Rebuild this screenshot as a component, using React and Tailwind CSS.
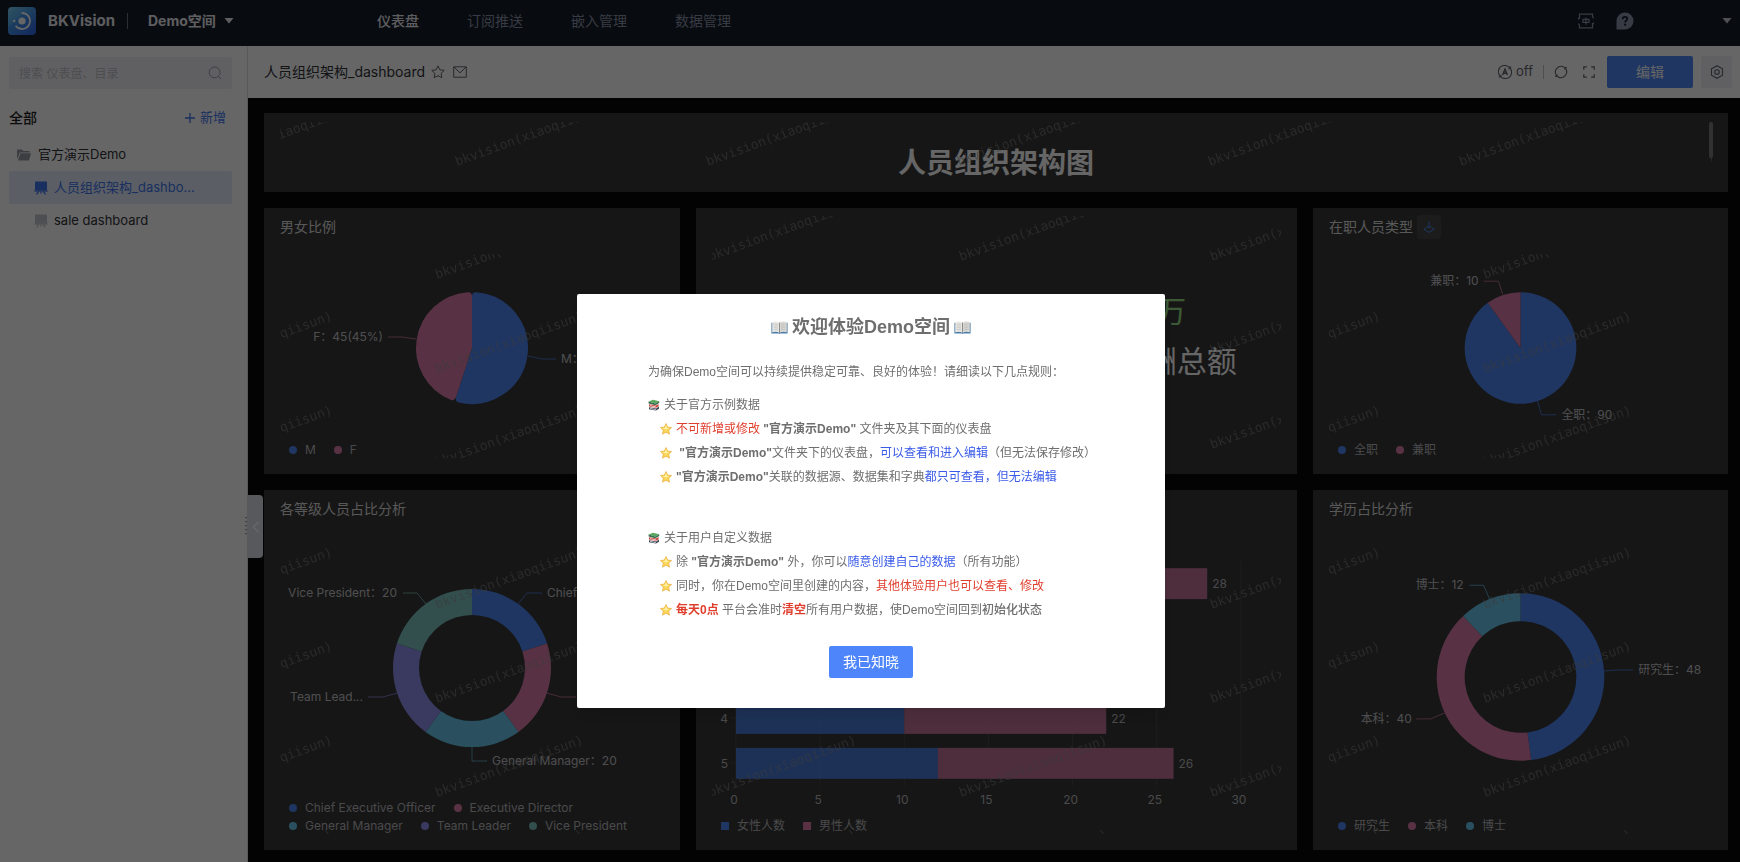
import React from "react";

const BLUE = "#4e87f5";
const PINK = "#dc7daa";
const CYAN = "#69c8f0";
const PURPLE = "#9191f0";
const GREEN = "#7dc3c0";

/* ---------- geometry ---------- */

function polar(cx, cy, r, deg) {
  const a = ((deg - 90) * Math.PI) / 180;
  return [cx + r * Math.cos(a), cy + r * Math.sin(a)];
}

function ringPath(cx, cy, r, inner, from, to) {
  const large = to - from > 180 ? 1 : 0;
  const [x0, y0] = polar(cx, cy, r, from);
  const [x1, y1] = polar(cx, cy, r, to);
  if (!inner) return `M${cx} ${cy}L${x0} ${y0}A${r} ${r} 0 ${large} 1 ${x1} ${y1}Z`;
  const [x2, y2] = polar(cx, cy, inner, to);
  const [x3, y3] = polar(cx, cy, inner, from);
  return `M${x0} ${y0}A${r} ${r} 0 ${large} 1 ${x1} ${y1}L${x2} ${y2}A${inner} ${inner} 0 ${large} 0 ${x3} ${y3}Z`;
}

/* Slice with rounded outer corners: an inset wedge, grown back by a round-joined stroke. */
function softSlicePath(cx, cy, r, d, from, to) {
  const half = (to - from) / 2;
  const [ax, ay] = polar(cx, cy, d / Math.sin((half * Math.PI) / 180), from + half);
  const rr = r - d;
  const shift = (Math.asin(d / rr) * 180) / Math.PI;
  const [x0, y0] = polar(cx, cy, rr, from + shift);
  const [x1, y1] = polar(cx, cy, rr, to - shift);
  const large = to - from - 2 * shift > 180 ? 1 : 0;
  return `M${ax} ${ay}L${x0} ${y0}A${rr} ${rr} 0 ${large} 1 ${x1} ${y1}Z`;
}

/* ---------- chart parts ---------- */

function PieChart({ label, height, cy, r, inner = 0, soft = false, slices, className }) {
  const total = slices.reduce((sum, s) => sum + s.value, 0);
  let angle = 0;
  return (
    <svg role="img" aria-label={label} viewBox={`0 0 384 ${height}`} className={className}>
      {slices.map((s) => {
        const from = angle;
        angle += (s.value / total) * 360;
        return soft ? (
          <path
            key={s.name}
            d={softSlicePath(192, cy, r, 4, from, angle)}
            fill={s.color}
            stroke={s.color}
            strokeWidth="8"
            strokeLinejoin="round"
          />
        ) : (
          <path key={s.name} d={ringPath(192, cy, r, inner, from, angle)} fill={s.color} />
        );
      })}
      {slices.map((s) => (
        <g key={s.name}>
          <polyline points={s.line} fill="none" stroke={s.color} strokeOpacity="0.75" />
          <text x={s.x} y={s.y + 4} textAnchor={s.anchor} fontSize="12" fill="#c4c4c8">
            {s.text}
          </text>
        </g>
      ))}
    </svg>
  );
}

function Legend({ rows, square = false }) {
  return (
    <div className="flex flex-col pt-px pl-[9px]">
      {rows.map((row, i) => (
        <ul key={i} className="flex h-[18px] items-center gap-[18px]">
          {row.map(([name, color]) => (
            <li key={name} className="flex items-center gap-2 text-xs whitespace-nowrap text-[#b8b8bc]">
              <svg viewBox="0 0 8 8" className="size-2" aria-hidden="true">
                {square ? <rect width="8" height="8" fill={color} /> : <circle cx="4" cy="4" r="4" fill={color} />}
              </svg>
              {name}
            </li>
          ))}
        </ul>
      ))}
    </div>
  );
}

function Watermark({ id, x, y }) {
  return (
    <svg aria-hidden="true" className="pointer-events-none absolute inset-0 size-full">
      <defs>
        <pattern id={id} x={x - 12} y={y - 80} width="251" height="94" patternUnits="userSpaceOnUse">
          <text
            x="14"
            y="80"
            transform="rotate(-20 14 80)"
            fontSize="13"
            fontFamily="DejaVu Sans Mono, monospace"
            fill="#909090"
            fillOpacity="0.55"
          >
            bkvision(xiaoqiisun)
          </text>
        </pattern>
      </defs>
      <rect width="100%" height="100%" fill={`url(#${id})`} />
    </svg>
  );
}

function Card({ title, action, watermark, children }) {
  return (
    <section className="flex min-w-0 flex-col bg-[#373737] px-4 pb-4">
      {title && (
        <header className="flex h-[46px] shrink-0 items-center gap-1 pb-2">
          <h2 className="text-sm text-[#dcdcdc]">{title}</h2>
          {action}
        </header>
      )}
      <div className={title ? "relative min-h-0 flex-1 overflow-hidden" : "relative mt-2 min-h-0 flex-1 overflow-hidden"}>
        {children}
        <Watermark {...watermark} />
      </div>
    </section>
  );
}

const BARS = [
  { name: "1", female: 13, male: 15 },
  { name: "2", female: 8, male: 10 },
  { name: "3", female: 9, male: 11 },
  { name: "4", female: 10, male: 12 },
  { name: "5", female: 12, male: 14 },
];

function BarChart() {
  const left = 24;
  const unit = 16.86;
  return (
    <svg role="img" aria-label="各部门男女人数" viewBox="0 0 570 280" className="h-[280px] w-full">
      {[0, 5, 10, 15, 20, 25, 30].map((n) => (
        <g key={n}>
          <line x1={left + n * unit} x2={left + n * unit} y1="25" y2="250" stroke="#4a4a4a" />
          <text x={left + n * unit - 2} y="268" textAnchor="middle" fontSize="12" fill="#b8b8bc">
            {n}
          </text>
        </g>
      ))}
      {BARS.map((b, i) => {
        const top = 32 + i * 45;
        const total = b.female + b.male;
        return (
          <g key={b.name}>
            <line x1="19" x2={left} y1={top + 15} y2={top + 15} stroke="#4a4a4a" />
            <text x="16" y={top + 20} textAnchor="end" fontSize="12" fill="#b8b8bc">
              {b.name}
            </text>
            <rect x={left} y={top} width={b.female * unit} height="31" fill={BLUE} fillOpacity="0.86" />
            <rect x={left + b.female * unit} y={top} width={b.male * unit} height="31" fill={PINK} fillOpacity="0.84" />
            <text x={left + total * unit + 5} y={top + 20} fontSize="12" fill="#b8b8bc">
              {total}
            </text>
          </g>
        );
      })}
    </svg>
  );
}

/* ---------- icons ---------- */

function Logo() {
  return (
    <svg viewBox="0 0 28 28" className="size-7" aria-hidden="true">
      <defs>
        <linearGradient id="logo" x1="0" y1="0" x2="1" y2="1">
          <stop offset="0" stopColor="#7cd0f5" />
          <stop offset="0.45" stopColor="#4ba0ee" />
          <stop offset="1" stopColor="#2f5ee8" />
        </linearGradient>
      </defs>
      <rect width="28" height="28" rx="4" fill="url(#logo)" />
      <path d="M0 20L16 6L28 16V24A4 4 0 0 1 24 28H4A4 4 0 0 1 0 24Z" fill="#2f6fe8" opacity="0.25" />
      <circle cx="14" cy="14" r="3.6" fill="#fff" />
      <path d="M13.6 6A8 8 0 1 1 7.6 18.8" fill="none" stroke="#fff" strokeWidth="1.8" />
      <circle cx="6.2" cy="14" r="1.2" fill="#fff" />
    </svg>
  );
}

function Caret() {
  return (
    <svg viewBox="0 0 10 6" className="h-1.5 w-2.5" aria-hidden="true">
      <path d="M0.5 0H9.5L5 5.5Z" fill="currentColor" />
    </svg>
  );
}

function LanguageIcon() {
  return (
    <svg viewBox="0 0 16 16" className="size-4" fill="none" stroke="currentColor" strokeWidth="1.3" aria-hidden="true">
      <path d="M1.5 6V1.2H14.5V4M14.5 10V14.8H1.5V12M0 6.4L1.5 4.4M16 9.6L14.5 11.6M14.5 4L15.8 5.4M1.5 12L0.2 10.6" />
      <path d="M5 6.3H11V9.3H5ZM8 4.4V11.8" strokeWidth="1.2" />
    </svg>
  );
}

function HelpIcon() {
  return (
    <svg viewBox="0 0 18 18" className="size-[18px]" aria-hidden="true">
      <path d="M9 0.5A8.5 8.5 0 1 1 9 17.5H1Q0.5 17.5 0.5 17V9A8.5 8.5 0 0 1 9 0.5Z" fill="currentColor" />
      <path d="M6.7 7.2C6.7 5.7 7.7 4.9 9 4.9C10.4 4.9 11.3 5.7 11.3 6.9C11.3 8.4 9.1 8.6 9.1 10.4" fill="none" stroke="#161c2a" strokeWidth="1.7" />
      <circle cx="9.1" cy="12.7" r="1.1" fill="#161c2a" />
    </svg>
  );
}

function BoardIcon() {
  return (
    <svg viewBox="0 0 14 14" className="size-3.5" fill="currentColor" aria-hidden="true">
      <rect x="1" y="0.4" width="12" height="8.8" rx="0.6" />
      <path d="M0.4 9.2H13.6V10.6H0.4Z" />
      <path d="M4.6 10.4L2.6 13.4M9.4 10.4L11.4 13.4M7 10.4V12.4" stroke="currentColor" strokeWidth="1.3" />
    </svg>
  );
}

function FolderIcon() {
  return (
    <svg viewBox="0 0 14 12" className="h-3 w-3.5" fill="currentColor" aria-hidden="true">
      <path d="M0 0.6H5L6.4 2H12.6V3.4H2.8L0.6 9.5H0Z" />
      <path d="M3.4 4.2H14L12 11.4H1Z" />
    </svg>
  );
}

function AutoIcon() {
  return (
    <svg viewBox="0 0 14 14" className="size-3.5" fill="none" stroke="currentColor" strokeWidth="1.1" aria-hidden="true">
      <path d="M2.6 11.5A6.2 6.2 0 0 1 10.6 1.9M11.4 2.5A6.2 6.2 0 0 1 3.4 12.1" />
      <path d="M0.8 11.9H3V9.8M13.2 2.1H11V4.2" />
      <path d="M4.6 10L7 4.2L9.4 10M5.5 8.3H8.5" strokeWidth="1.4" />
    </svg>
  );
}

function RefreshIcon() {
  return (
    <svg viewBox="0 0 14 14" className="size-3.5" fill="none" stroke="currentColor" strokeWidth="1.1" aria-hidden="true">
      <path d="M2.8 10.8A5.7 5.7 0 0 1 10.2 2.3M11.2 3.2A5.7 5.7 0 0 1 3.8 11.7" />
      <path d="M1.2 11.4H3.2V9.4M12.8 2.6H10.8V4.6" />
    </svg>
  );
}

function FullscreenIcon() {
  return (
    <svg viewBox="0 0 12 12" className="size-3" fill="none" stroke="currentColor" strokeWidth="1.2" aria-hidden="true">
      <path d="M0.8 3.8V0.8H3.8M8.2 0.8H11.2V3.8M11.2 8.2V11.2H8.2M3.8 11.2H0.8V8.2" />
    </svg>
  );
}

function SettingIcon() {
  return (
    <svg viewBox="0 0 14 14" className="size-3.5" fill="none" stroke="currentColor" strokeWidth="1.1" aria-hidden="true">
      <path d="M7 0.7L12.5 3.8V10.2L7 13.3L1.5 10.2V3.8Z" />
      <circle cx="7" cy="7" r="2.3" />
    </svg>
  );
}

function StarOutline() {
  return (
    <svg viewBox="0 0 14 14" className="size-3.5" fill="none" stroke="currentColor" strokeLinejoin="round" aria-hidden="true">
      <path d="M7 0.9L8.9 4.8L13.2 5.4L10.1 8.4L10.8 12.7L7 10.7L3.2 12.7L3.9 8.4L0.8 5.4L5.1 4.8Z" />
    </svg>
  );
}

function MailIcon() {
  return (
    <svg viewBox="0 0 14 12" className="h-3 w-3.5" fill="none" stroke="currentColor" aria-hidden="true">
      <path d="M0.7 0.8H13.3V11.2H0.7ZM1 1L7 6.8L13 1" />
    </svg>
  );
}

function SearchIcon() {
  return (
    <svg viewBox="0 0 14 14" className="size-3.5" fill="none" stroke="currentColor" aria-hidden="true">
      <circle cx="6.6" cy="6.4" r="5.4" />
      <path d="M10.4 10.4L13 13" />
    </svg>
  );
}

function DrillIcon() {
  return (
    <svg viewBox="0 0 12 12" className="size-3" fill="none" stroke={BLUE} aria-hidden="true">
      <path d="M6 0.5V7M3.6 4.8L6 7.2L8.4 4.8M3.4 6.6L0.8 8.2L6 11.4L11.2 8.2L8.6 6.6" />
    </svg>
  );
}

function OpenBook() {
  return (
    <svg viewBox="0 0 18 14" className="h-[13px] w-[17px]" aria-hidden="true">
      <path d="M0.3 1.8H17.7V13.4H10L9 14L8 13.4H0.3Z" fill="#4d7ea8" />
      <path d="M1.2 1.1C4 0.2 7 0.2 9 1.8V12.8C7 11.4 4 11.4 1.2 12.2Z" fill="#eceae6" />
      <path d="M16.8 1.1C14 0.2 11 0.2 9 1.8V12.8C11 11.4 14 11.4 16.8 12.2Z" fill="#dcdad6" />
      <path d="M9 1.8V12.8" stroke="#7f7f7f" strokeWidth="0.9" />
      <path d="M2.6 3.4C4.3 3 6 3.1 7.6 3.9M2.6 5.4C4.3 5 6 5.1 7.6 5.9M2.6 7.4C4.3 7 6 7.1 7.6 7.9M2.6 9.4C4.3 9 6 9.1 7.6 9.9M15.4 3.4C13.7 3 12 3.1 10.4 3.9M15.4 5.4C13.7 5 12 5.1 10.4 5.9M15.4 7.4C13.7 7 12 7.1 10.4 7.9M15.4 9.4C13.7 9 12 9.1 10.4 9.9" fill="none" stroke="#a9a9a9" strokeWidth="0.6" />
    </svg>
  );
}

function Books() {
  return (
    <svg viewBox="0 0 12 12" className="size-3" aria-hidden="true">
      <path d="M1 8.2L8.2 9.4L11 7.6V9.8L8 11.6L1 10.2Z" fill="#3d4350" />
      <path d="M1 5.2L8 6.6L10.6 5V7.2L8 8.8L1 7.4Z" fill="#c9453b" />
      <path d="M2 6.2L8 7.4V8.2L2 7Z" fill="#f3e9e2" />
      <path d="M2 9L8 10.2V10.9L2 9.7Z" fill="#d7dae2" />
      <path d="M0.6 2.6L5 0.8L11.2 2.2L7.4 4.4Z" fill="#58a85f" />
      <path d="M0.6 2.6L7.4 4.4L11.2 2.2V4L7.4 6.2L0.6 4.6Z" fill="#3a6f50" />
    </svg>
  );
}

function GoldStar() {
  return (
    <svg viewBox="0 0 12 12" className="size-3 shrink-0" aria-hidden="true">
      <path
        d="M6 0.5L7.7 4.1L11.6 4.5L8.7 7.2L9.5 11.2L6 9.2L2.5 11.2L3.3 7.2L0.4 4.5L4.3 4.1Z"
        fill="#fbd65a"
        stroke="#e5ac3a"
        strokeWidth="0.7"
        strokeLinejoin="round"
      />
      <path d="M6 2L7 4.8L9.6 5.1L6 6.4L2.4 5.1L5 4.8Z" fill="#fff2a8" />
    </svg>
  );
}

/* ---------- page regions ---------- */

function TopBar() {
  return (
    <header className="flex h-[46px] items-center bg-[#161c2a] text-sm text-[#8b93a7]">
      <div className="flex w-[377px] shrink-0 items-center pb-1 pl-2">
        <Logo />
        <span className="pl-3 text-[15px] font-bold text-[#eaebf0]">BKVision</span>
        <span className="ml-3 h-4 w-px bg-[#6b7385]" />
        <button type="button" className="ml-5 flex items-center gap-2 font-bold text-[#eaebf0]">
          Demo空间
          <Caret />
        </button>
      </div>
      <nav className="flex flex-1 items-center gap-12 pb-1">
        <a href="#dashboards" className="font-medium text-[#eaebf0]">仪表盘</a>
        <a href="#subscriptions">订阅推送</a>
        <a href="#embeds">嵌入管理</a>
        <a href="#data">数据管理</a>
      </nav>
      <div className="flex items-center pr-2 pb-1">
        <button type="button" aria-label="切换语言"><LanguageIcon /></button>
        <button type="button" aria-label="帮助" className="ml-[22px]"><HelpIcon /></button>
        <button type="button" aria-label="用户菜单" className="ml-[88px] text-[#c4c9d6]"><Caret /></button>
      </div>
    </header>
  );
}

function Sidebar() {
  return (
    <aside className="w-[248px] shrink-0 border-r border-[#dcdee5] bg-white pt-[11px] pr-[15px] pl-[9px] text-[13px] text-[#313238]">
      <label className="flex h-8 items-center rounded-xs bg-[#f0f1f5] px-2.5 text-[#979ba5]">
        <span className="sr-only">搜索</span>
        <input
          type="search"
          placeholder="搜索 仪表盘、目录"
          className="h-full min-w-0 flex-1 bg-transparent text-xs outline-none placeholder:text-[#c0c2c9]"
        />
        <SearchIcon />
      </label>
      <div className="mt-[15px] flex h-7 items-center justify-between pr-1.5">
        <h2 className="text-sm font-medium text-[#1c1d22]">全部</h2>
        <button type="button" className="flex items-center gap-1 text-[#3f76f0]">
          <svg viewBox="0 0 12 12" className="size-3" stroke="currentColor" strokeWidth="1.3" aria-hidden="true">
            <path d="M1 6H11M6 1V11" />
          </svg>
          新增
        </button>
      </div>
      <ul className="mt-1.5">
        <li className="flex h-[33px] items-center gap-[7px] pl-2">
          <span className="text-[#979ba5]"><FolderIcon /></span>
          官方演示Demo
        </li>
        <li>
          <a href="#org" className="flex h-[33px] items-center gap-1.5 rounded-xs bg-[#e3eaf9] pl-[25px] text-[#3f76f0]">
            <BoardIcon />
            人员组织架构_dashbo...
          </a>
        </li>
        <li>
          <a href="#sale" className="flex h-[33px] items-center gap-1.5 pl-[25px]">
            <span className="text-[#c4c6cc]"><BoardIcon /></span>
            sale dashboard
          </a>
        </li>
      </ul>
    </aside>
  );
}

function Toolbar() {
  return (
    <div className="flex h-[52px] items-center bg-white pr-2 pl-4 text-[#63656e]">
      <h1 className="text-sm text-[#313238]">人员组织架构_dashboard</h1>
      <button type="button" aria-label="收藏" className="ml-1.5"><StarOutline /></button>
      <button type="button" aria-label="订阅" className="ml-2"><MailIcon /></button>
      <div className="ml-auto flex items-center">
        <button type="button" className="flex items-center gap-1 text-[13px]">
          <AutoIcon />
          off
        </button>
        <span className="mx-2.5 h-3.5 w-px bg-[#c4c6cc]" />
        <button type="button" aria-label="刷新"><RefreshIcon /></button>
        <button type="button" aria-label="全屏" className="ml-[15px]"><FullscreenIcon /></button>
        <button type="button" className="ml-3 h-8 w-[86px] rounded-xs bg-[#4e87f5] text-sm text-white">编辑</button>
        <button type="button" aria-label="设置" className="ml-2 flex h-8 w-[31px] items-center justify-center rounded-xs bg-[#f0f1f5]">
          <SettingIcon />
        </button>
      </div>
    </div>
  );
}

function Metric({ value, name }) {
  return (
    <div className="flex flex-col items-center gap-2">
      <strong className="text-[30px] leading-[42px] font-normal text-[#96dc82]">{value}</strong>
      <span className="text-[30px] leading-[42px] whitespace-nowrap text-white">{name}</span>
    </div>
  );
}

function Canvas() {
  return (
    <div className="grid flex-1 grid-cols-[416fr_601fr_415fr] grid-rows-[79px_266px_360px] gap-4 bg-[#080808] pt-[15px] pr-3 pb-3 pl-4">
      <section className="relative col-span-3 bg-[#373737] px-4 pt-[9px] pb-2">
        <div className="relative h-full overflow-hidden">
          <h2 className="pt-5 text-center text-[28px] leading-[42px] font-bold text-white">人员组织架构图</h2>
          <Watermark id="wm-banner" x={175} y={44} />
        </div>
        <span className="absolute top-[9px] right-[15px] h-9 w-1 rounded-full bg-[#7c7c7c]" />
      </section>

      <Card title="男女比例" watermark={{ id: "wm-gender", x: 155, y: 25 }}>
        <PieChart
          label="男女比例"
          height={186}
          cy={94}
          r={56}
          soft
          className="h-[186px] w-full"
          slices={[
            { name: "M", value: 55, color: BLUE, line: "248,102 262,105 276,105", text: "M：55(55%)", x: 281, y: 105, anchor: "start" },
            { name: "F", value: 45, color: PINK, line: "136,85 122,83 108,83", text: "F：45(45%)", x: 103, y: 83, anchor: "end" },
          ]}
        />
        <Legend rows={[[["M", BLUE], ["F", PINK]]]} />
      </Card>

      <Card watermark={{ id: "wm-metric", x: -4, y: 45 }}>
        <div className="grid grid-cols-2 gap-8 pt-[74px]">
          <Metric value="1.2万" name="人均薪酬" />
          <Metric value="128万" name="年度薪酬总额" />
        </div>
      </Card>

      <Card
        title="在职人员类型"
        action={
          <button type="button" aria-label="下钻" className="flex size-6 items-center justify-center rounded-sm bg-[#464646]">
            <DrillIcon />
          </button>
        }
        watermark={{ id: "wm-type", x: 154, y: 25 }}
      >
        <PieChart
          label="在职人员类型"
          height={186}
          cy={94}
          r={56}
          className="h-[186px] w-full"
          slices={[
            { name: "全职", value: 90, color: BLUE, line: "209,147 213,161 228,161", text: "全职：90", x: 233, y: 161, anchor: "start" },
            { name: "兼职", value: 10, color: PINK, line: "174,40 170,27 155,27", text: "兼职：10", x: 150, y: 27, anchor: "end" },
          ]}
        />
        <Legend rows={[[["全职", BLUE], ["兼职", PINK]]]} />
      </Card>

      <Card title="各等级人员占比分析" watermark={{ id: "wm-level", x: 155, y: 73 }}>
        <PieChart
          label="各等级人员占比分析"
          height={262}
          cy={132}
          r={79}
          inner={53}
          className="h-[262px] w-full"
          slices={[
            { name: "Chief Executive Officer", value: 20, color: BLUE, line: "238,68 247,57 262,57", text: "Chief Execut...", x: 267, y: 57, anchor: "start" },
            { name: "Executive Director", value: 20, color: PINK, line: "267,157 281,161 296,161", text: "Executive...", x: 301, y: 161, anchor: "start" },
            { name: "General Manager", value: 20, color: CYAN, line: "192,211 192,225 207,225", text: "General Manager：20", x: 212, y: 225, anchor: "start" },
            { name: "Team Leader", value: 20, color: PURPLE, line: "117,157 103,161 88,161", text: "Team Lead...", x: 83, y: 161, anchor: "end" },
            { name: "Vice President", value: 20, color: GREEN, line: "146,68 137,57 123,57", text: "Vice President：20", x: 117, y: 57, anchor: "end" },
          ]}
        />
        <Legend
          rows={[
            [["Chief Executive Officer", BLUE], ["Executive Director", PINK]],
            [["General Manager", CYAN], ["Team Leader", PURPLE], ["Vice President", GREEN]],
          ]}
        />
      </Card>

      <Card title="男女人数分布" watermark={{ id: "wm-bars", x: -4, y: 73 }}>
        <BarChart />
        <Legend square rows={[[["女性人数", BLUE], ["男性人数", PINK]]]} />
      </Card>

      <Card title="学历占比分析" watermark={{ id: "wm-degree", x: 154, y: 73 }}>
        <PieChart
          label="学历占比分析"
          height={280}
          cy={141}
          r={84}
          inner={56}
          className="h-[280px] w-full"
          slices={[
            { name: "研究生", value: 48, color: BLUE, line: "276,135 288,134 305,134", text: "研究生：48", x: 310, y: 134, anchor: "start" },
            { name: "本科", value: 40, color: PINK, line: "116,177 102,183 87,183", text: "本科：40", x: 83, y: 183, anchor: "end" },
            { name: "博士", value: 12, color: CYAN, line: "161,63 155,49 141,49", text: "博士：12", x: 135, y: 49, anchor: "end" },
          ]}
        />
        <Legend rows={[[["研究生", BLUE], ["本科", PINK], ["博士", CYAN]]]} />
      </Card>
    </div>
  );
}

function CollapseHandle() {
  return (
    <button
      type="button"
      aria-label="收起侧栏"
      className="absolute top-[449px] left-0 flex h-[63px] w-[15px] items-center justify-center rounded-r bg-[#dcdee5] text-white"
    >
      <svg viewBox="0 0 8 14" className="h-3 w-2" fill="none" stroke="currentColor" strokeWidth="1.8" aria-hidden="true">
        <path d="M7 1L1 7L7 13" />
      </svg>
      <svg viewBox="0 0 2 20" className="absolute top-[21px] -left-[3px] h-5 w-0.5" aria-hidden="true">
        <path d="M1 1V20" stroke="#63656e" strokeWidth="1.2" strokeDasharray="1.2 2.8" />
      </svg>
    </button>
  );
}

function Item({ children }) {
  return (
    <li className="flex items-center gap-1 pl-3">
      <GoldStar />
      <span className="whitespace-pre">{children}</span>
    </li>
  );
}

const Warn = ({ children }) => <span className="text-[#e03e2d]">{children}</span>;
const Note = ({ children }) => <span className="text-[#3a5be8]">{children}</span>;

function WelcomeDialog() {
  return (
    <div className="fixed inset-0 flex items-start justify-center bg-black/60 pt-[294px] pl-0.5">
      <div
        role="dialog"
        aria-modal="true"
        aria-labelledby="welcome-title"
        className="w-[588px] rounded-xs bg-white px-[71px] pt-[19px] pb-[30px] font-['Liberation_Sans','Noto_Sans_CJK_SC',sans-serif] text-xs leading-6 text-[#6e6e6e] shadow-lg"
      >
        <h2 id="welcome-title" className="flex h-7 items-center justify-center gap-1 text-lg font-bold">
          <OpenBook />
          欢迎体验Demo空间
          <OpenBook />
        </h2>
        <p className="mt-[19px] whitespace-nowrap">为确保Demo空间可以持续提供稳定可靠、良好的体验！请细读以下几点规则：</p>
        <h3 className="mt-[9px] flex items-center gap-1"><Books />关于官方示例数据</h3>
        <ul>
          <Item><Warn>不可新增或修改</Warn> <b>"官方演示Demo"</b> 文件夹及其下面的仪表盘</Item>
          <Item> <b>"官方演示Demo"</b>文件夹下的仪表盘，<Note>可以查看和进入编辑</Note>（但无法保存修改）</Item>
          <Item><b>"官方演示Demo"</b>关联的数据源、数据集和字典<Note>都只可查看，但无法编辑</Note></Item>
        </ul>
        <h3 className="mt-[37px] flex items-center gap-1"><Books />关于用户自定义数据</h3>
        <ul>
          <Item>除 <b>"官方演示Demo"</b> 外，你可以<Note>随意创建自己的数据</Note>（所有功能）</Item>
          <Item>同时，你在Demo空间里创建的内容，<Warn>其他体验用户也可以查看、修改</Warn></Item>
          <Item><Warn><b>每天0点</b></Warn> 平台会准时<Warn><b>清空</b></Warn>所有用户数据，使Demo空间回到<span className="font-medium">初始化状态</span></Item>
        </ul>
        <div className="mt-6 flex justify-center">
          <button type="button" className="h-8 w-[84px] rounded-xs bg-[#4e85fa] text-sm text-white">我已知晓</button>
        </div>
      </div>
    </div>
  );
}

export default function App() {
  return (
    <div className="flex min-h-screen flex-col font-['Inter','Noto_Sans_CJK_SC',sans-serif]">
      <TopBar />
      <div className="flex flex-1">
        <Sidebar />
        <main className="relative flex min-w-0 flex-1 flex-col">
          <Toolbar />
          <Canvas />
          <CollapseHandle />
        </main>
      </div>
      <WelcomeDialog />
    </div>
  );
}
